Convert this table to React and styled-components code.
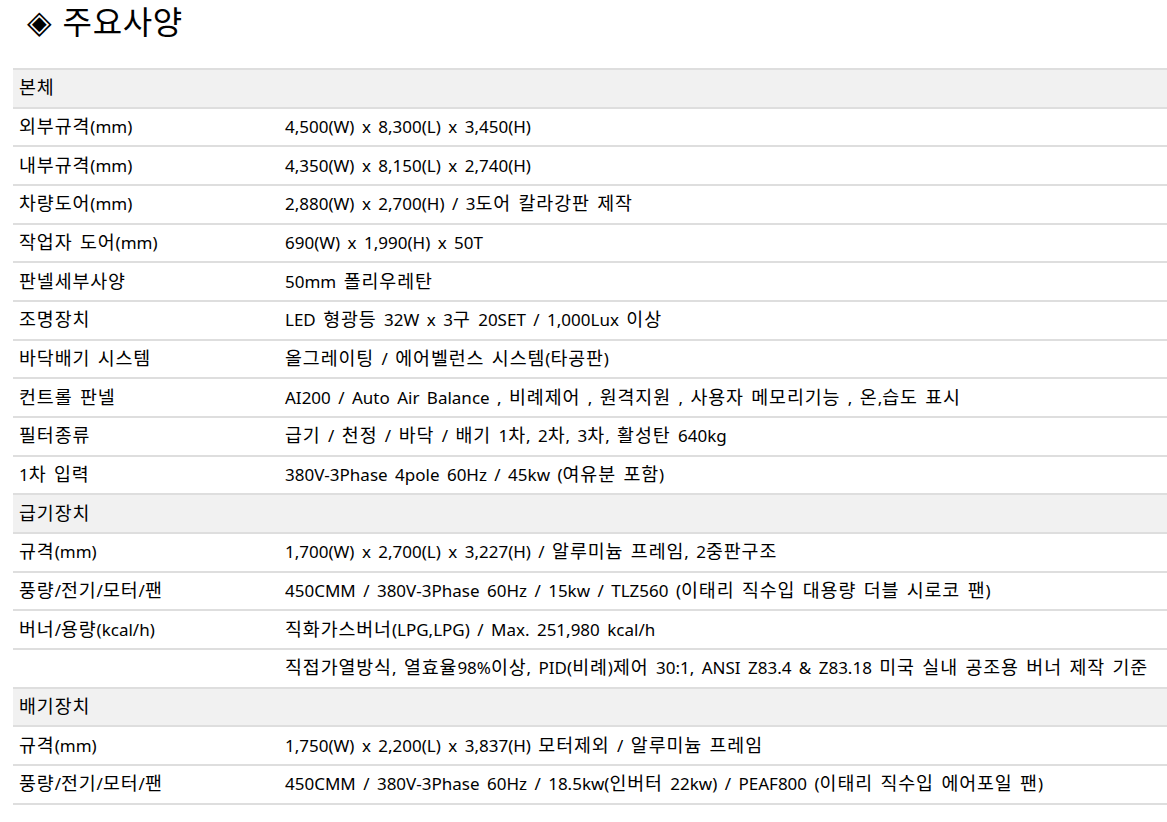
import React from "react"
import styled, { createGlobalStyle } from "styled-components"

const GlobalStyle = createGlobalStyle`
  html, body {
    margin: 0;
    padding: 0;
    background: #fff;
  }
  body {
    font-family: "Noto Sans", "Noto Sans CJK KR", sans-serif;
    color: #000;
  }
`

const Page = styled.div`
  overflow: hidden;
`

const Title = styled.h2`
  margin: 0;
  padding: 0 0 0 27px;
  height: 68px;
  box-sizing: border-box;
  font-size: 30px;
  font-weight: 400;
  line-height: 44px;
  display: flex;
  align-items: flex-start;
  gap: 11px;
`

const TitleMark = styled.span`
  font-size: 32px;
  font-family: "DejaVu Sans", sans-serif;
`

const TitleText = styled.span`
  font-size: 32px;
  letter-spacing: 0.6px;
`

const Table = styled.div`
  margin-left: 13px;
  width: calc(100% + 40px);
  border-bottom: 2px solid #dedede;
`

const Row = styled.div`
  display: grid;
  grid-template-columns: 266px 1fr;
  align-items: center;
  height: 38.68px;
  box-sizing: border-box;
  border-top: 2px solid #dedede;
  background: ${(p) => (p.$section ? "#f1f1f1" : "#fff")};
  font-size: 17px;
  line-height: 22px;
  word-spacing: 3px;
`

const Cell = styled.div`
  padding: 0 6px;
  white-space: nowrap;
`

const Ko = styled.span`
  font-size: 18.4px;
  line-height: 1;
  letter-spacing: 0.9px;
`

const Txt = ({ children }) =>
  String(children)
    .split(/([\uAC00-\uD7A3]+)/)
    .map((part, i) => (/[\uAC00-\uD7A3]/.test(part) ? <Ko key={i}>{part}</Ko> : part))

const rows = [
  { section: "본체" },
  ["외부규격(mm)", "4,500(W) x 8,300(L) x 3,450(H)"],
  ["내부규격(mm)", "4,350(W) x 8,150(L) x 2,740(H)"],
  ["차량도어(mm)", "2,880(W) x 2,700(H) / 3도어 칼라강판 제작"],
  ["작업자 도어(mm)", "690(W) x 1,990(H) x 50T"],
  ["판넬세부사양", "50mm 폴리우레탄"],
  ["조명장치", "LED 형광등 32W x 3구 20SET / 1,000Lux 이상"],
  ["바닥배기 시스템", "올그레이팅 / 에어벨런스 시스템(타공판)"],
  ["컨트롤 판넬", "AI200 / Auto Air Balance , 비례제어 , 원격지원 , 사용자 메모리기능 , 온,습도 표시"],
  ["필터종류", "급기 / 천정 / 바닥 / 배기 1차, 2차, 3차, 활성탄 640kg"],
  ["1차 입력", "380V-3Phase 4pole 60Hz / 45kw (여유분 포함)"],
  { section: "급기장치" },
  ["규격(mm)", "1,700(W) x 2,700(L) x 3,227(H) / 알루미늄 프레임, 2중판구조"],
  ["풍량/전기/모터/팬", "450CMM / 380V-3Phase 60Hz / 15kw / TLZ560 (이태리 직수입 대용량 더블 시로코 팬)"],
  ["버너/용량(kcal/h)", "직화가스버너(LPG,LPG) / Max. 251,980 kcal/h"],
  ["", "직접가열방식, 열효율98%이상, PID(비례)제어 30:1, ANSI Z83.4 & Z83.18 미국 실내 공조용 버너 제작 기준"],
  { section: "배기장치" },
  ["규격(mm)", "1,750(W) x 2,200(L) x 3,837(H) 모터제외 / 알루미늄 프레임"],
  ["풍량/전기/모터/팬", "450CMM / 380V-3Phase 60Hz / 18.5kw(인버터 22kw) / PEAF800 (이태리 직수입 에어포일 팬)"],
]

const App = () => (
  <Page>
    <GlobalStyle />
    <Title>
      <TitleMark>◈</TitleMark>
      <TitleText>주요사양</TitleText>
    </Title>
    <Table>
      {rows.map((r, i) =>
        r.section ? (
          <Row key={i} $section>
            <Cell><Txt>{r.section}</Txt></Cell>
            <Cell />
          </Row>
        ) : (
          <Row key={i}>
            <Cell><Txt>{r[0]}</Txt></Cell>
            <Cell><Txt>{r[1]}</Txt></Cell>
          </Row>
        )
      )}
    </Table>
  </Page>
)

export default App
